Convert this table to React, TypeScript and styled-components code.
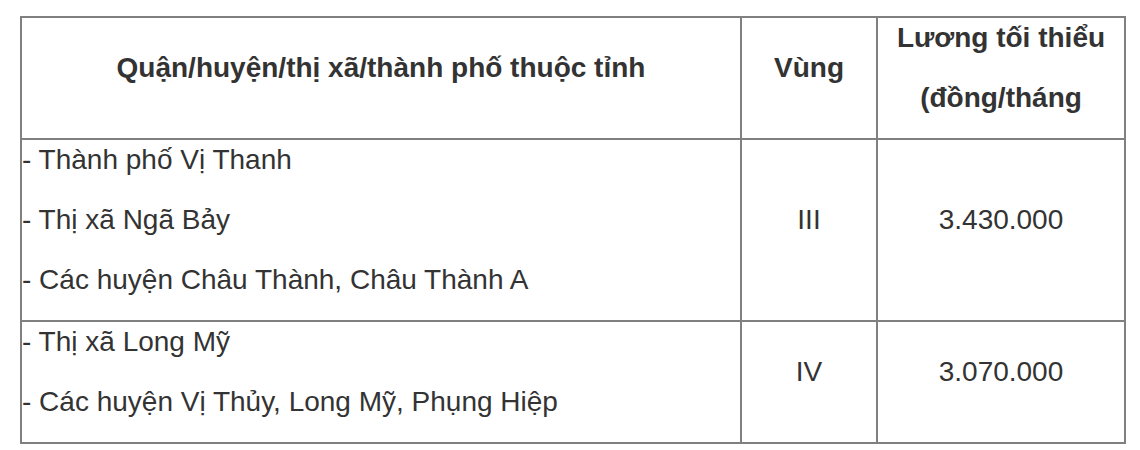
import React from "react";
import styled, { createGlobalStyle } from "styled-components";

const Global = createGlobalStyle`
  html, body { margin: 0; padding: 0; background: #fff; }
  body { font-family: "Liberation Sans", Arial, Helvetica, sans-serif; color: #333; }
`;

const Page = styled.div`
  padding: 16px 0 0 20px;
`;

const Table = styled.div`
  display: grid;
  grid-template-columns: 718px 134px 246px;
  gap: 2px;
  padding: 2px;
  width: max-content;
  background: #808080;
`;

const Cell = styled.div<{ $align?: "left" | "center"; $head?: boolean; $middle?: boolean }>`
  background: #fff;
  display: flex;
  flex-direction: column;
  justify-content: ${(p) => (p.$middle ? "center" : "flex-start")};
  text-align: ${(p) => p.$align ?? "center"};
  font-size: 28px;
  font-weight: ${(p) => (p.$head ? 700 : 400)};
`;

const Line = styled.p`
  margin: 0 0 20px;
  line-height: 40px;
  white-space: nowrap;
`;

type Row = { places: string[]; zone: string; wage: string };

const rows: Row[] = [
  {
    places: [
      "- Thành phố Vị Thanh",
      "- Thị xã Ngã Bảy",
      "- Các huyện Châu Thành, Châu Thành A",
    ],
    zone: "III",
    wage: "3.430.000",
  },
  {
    places: ["- Thị xã Long Mỹ", "- Các huyện Vị Thủy, Long Mỹ, Phụng Hiệp"],
    zone: "IV",
    wage: "3.070.000",
  },
];

export default function App() {
  return (
    <>
      <Global />
      <Page>
        <Table>
          <Cell $head $middle>
            <Line>Quận/huyện/thị xã/thành phố thuộc tỉnh</Line>
          </Cell>
          <Cell $head $middle>
            <Line>Vùng</Line>
          </Cell>
          <Cell $head $middle>
            <Line>Lương tối thiểu</Line>
            <Line>(đồng/tháng</Line>
          </Cell>
          {rows.map((r) => (
            <React.Fragment key={r.zone}>
              <Cell $align="left">
                {r.places.map((p) => (
                  <Line key={p}>{p}</Line>
                ))}
              </Cell>
              <Cell $middle>
                <Line>{r.zone}</Line>
              </Cell>
              <Cell $middle>
                <Line>{r.wage}</Line>
              </Cell>
            </React.Fragment>
          ))}
        </Table>
      </Page>
    </>
  );
}
